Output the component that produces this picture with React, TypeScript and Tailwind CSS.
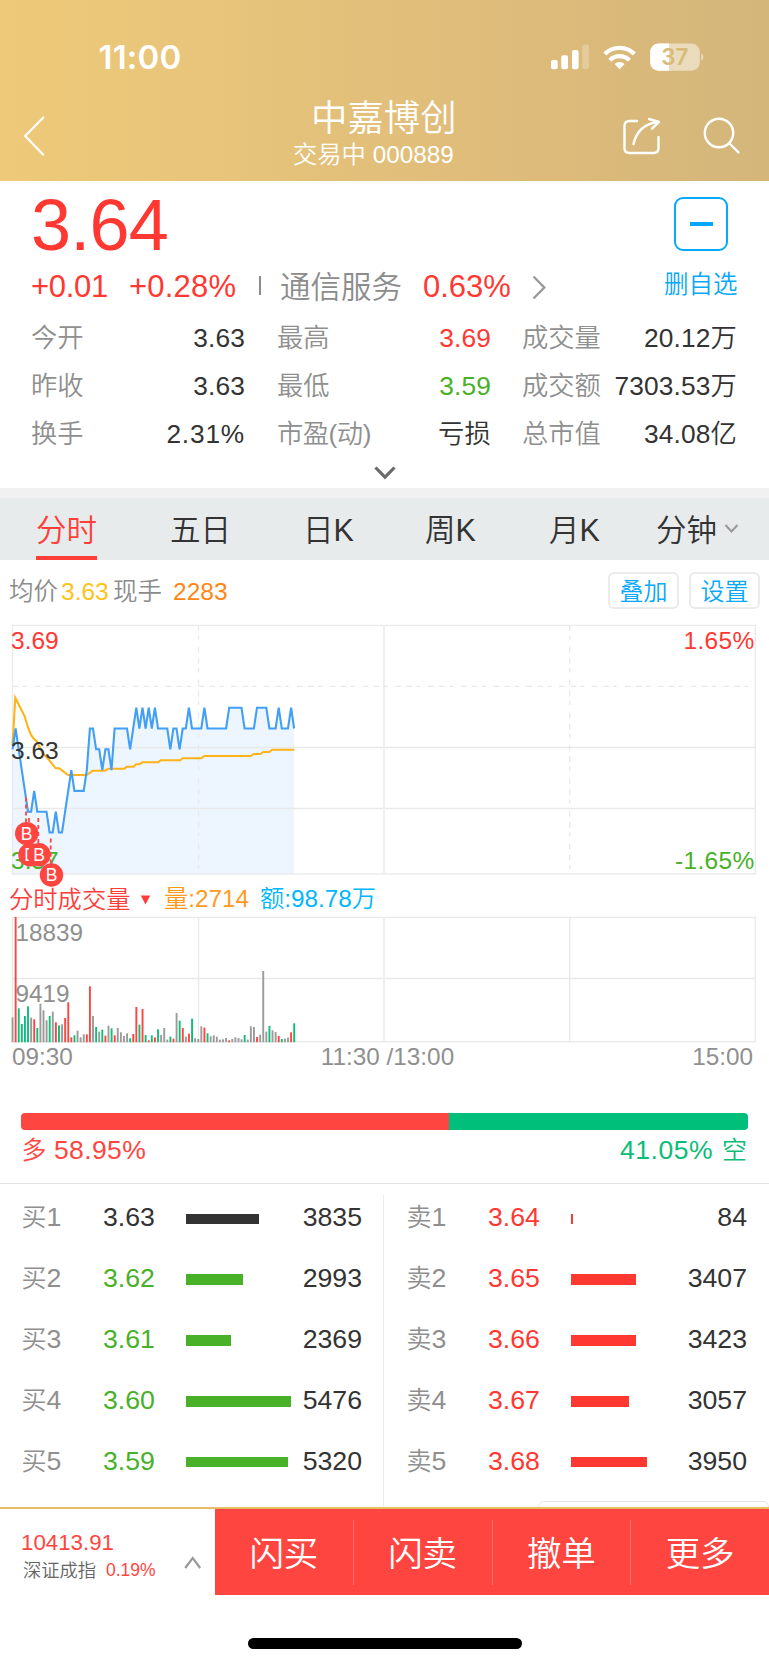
import React from "react";

const GRAY = "#8f8f8f";
const RED = "#ff3832";
const GREEN = "#48b128";

const LEFT = 12.5;
const RIGHT = 755.3;
const STEP = 3.095;

// Price level per minute, counted in ticks of 0.01 above 3.59
const ticks: number[] = [
  4, 5, 4, 3, 2, 1, 1, 2, 1, 1, 1, 1, 0, 0, 1, 0, 0, 1, 2, 3, 2, 2, 2, 2, 3, 5, 5, 4, 4, 3, 4, 4, 3, 5, 5, 5, 5, 5, 4, 5,
  6, 5, 6, 5, 6, 5, 6, 5, 5, 5, 5, 4, 5, 5, 4, 5, 5, 6, 5, 5, 5, 5, 6, 5, 5, 5, 5, 5, 5, 5, 6, 6, 6, 6, 6, 5, 5, 5, 5, 6,
  6, 6, 6, 5, 5, 5, 6, 5, 5, 5, 6, 5,
];

const pricePoints = ticks
  .map((t, i) => `${(LEFT + i * STEP).toFixed(1)},${(832.5 - t * 20.8 - 615).toFixed(1)}`)
  .join(" ");
const priceArea = `${LEFT},259 ${pricePoints} ${LEFT + 91 * STEP},259`;

const averagePoints =
  "12.5,130 15.3,82.7 24.7,101.3 27.7,111.7 31,120 34,124 37,126.3 40,133.3 43.3,138.7 49.3,145.3 55.7,153.3 59.3,153.3 68,160 86.7,160 92.7,155.7 105,155.7 108.3,153.7 124.3,153.7 127,151.7 133.7,151.7 136,149.3 139.3,149.3 142.3,147.3 158.3,147.3 160.7,145.3 180.3,145.3 182.7,143.3 201.3,143.3 204.3,141 250.7,141 253.7,139 260.3,139 263.3,137 269.3,137 272.3,134.7 294.3,134.7";

type Bar = [string, number];
// Colour key and height in thirds of a pixel
const bars: Bar[] = [
  ["n", 75], ["r", 376], ["g", 102], ["g", 55], ["g", 79], ["g", 108], ["n", 74], ["r", 69], ["g", 43], ["n", 116],
  ["n", 96], ["n", 66], ["g", 79], ["n", 92], ["r", 60], ["g", 51], ["n", 54], ["r", 73], ["r", 120], ["r", 15],
  ["g", 21], ["n", 35], ["n", 15], ["n", 24], ["r", 24], ["r", 168], ["n", 79], ["g", 46], ["n", 32], ["g", 38],
  ["r", 20], ["n", 50], ["g", 42], ["r", 21], ["n", 43], ["n", 30], ["n", 19], ["n", 27], ["g", 12], ["r", 25],
  ["r", 106], ["g", 53], ["r", 100], ["g", 22], ["r", 6], ["g", 21], ["r", 15], ["g", 39], ["n", 22], ["n", 43],
  ["n", 8], ["g", 17], ["r", 11], ["n", 88], ["g", 65], ["r", 43], ["n", 17], ["r", 26], ["g", 71], ["n", 12],
  ["n", 10], ["n", 48], ["r", 44], ["g", 27], ["n", 18], ["n", 21], ["n", 17], ["n", 8], ["n", 9], ["n", 13],
  ["r", 6], ["n", 10], ["n", 15], ["n", 13], ["n", 9], ["g", 22], ["n", 8], ["n", 48], ["n", 46], ["r", 16],
  ["n", 23], ["n", 214], ["n", 32], ["g", 49], ["n", 36], ["n", 31], ["r", 19], ["g", 10], ["n", 11], ["n", 14],
  ["r", 30], ["g", 57],
];
const barColor: Record<string, string> = { n: "#9b9b9b", r: "#ff4540", g: "#0dbf7b" };

function StatusBar() {
  return (
    <div className="flex h-[114px] items-end pl-[98.500px]">
      <div className="w-[452.500px] font-[Inter] text-[33px] leading-[40px] font-semibold text-white mb-[37px] tracking-[0.2px]">11:00</div>
      <svg className="mb-[37px]" width="160" height="40" viewBox="551 37 160 40">
        <g fill="#fff">
          <rect x="551" y="60" width="6.7" height="9.2" rx="2" />
          <rect x="561.3" y="55.3" width="6.7" height="13.9" rx="2" />
          <rect x="572" y="50" width="6.6" height="19.2" rx="2" />
          <rect x="582.3" y="44.6" width="6.7" height="24.6" rx="2" opacity=".25" />
          <path d="M619.6 69.2l-5-5.2a7.6 7.6 0 0 1 10 0z" />
        </g>
        <g fill="none" stroke="#fff" strokeWidth="4.2">
          <path d="M609.8 60.2a14 14 0 0 1 19.6 0" />
          <path d="M604.8 53.8a21.5 21.5 0 0 1 29.6 0" strokeWidth="4.4" />
        </g>
        <clipPath id="battery"><rect x="650.2" y="43.6" width="49.6" height="27.2" rx="8.5" /></clipPath>
        <g clipPath="url(#battery)">
          <rect x="650" y="43" width="50" height="29" fill="#fff" opacity=".5" />
          <rect x="650" y="43" width="19" height="29" fill="#fff" />
        </g>
        <path d="M701.3 53.5a4.6 4.6 0 0 1 0 7.6z" fill="#fff" opacity=".55" />
        <text x="674.8" y="65.2" fontSize="22.5" fontWeight="600" textAnchor="middle" fontFamily="Inter" fill="#d9bb79">37</text>
      </svg>
    </div>
  );
}

function Header() {
  return (
    <header className="h-[181px] bg-[linear-gradient(90deg,#eec979_0%,#e8c57a_25%,#e0bd7a_58%,#d4b67b_100%)]">
      <StatusBar />
      <div className="-mt-[21px] flex h-[80px] items-start text-white">
        <div className="w-[293px] pl-[22px] pt-[21px]">
          <svg width="25" height="44" viewBox="22 114 25 44" fill="none" stroke="#fff" strokeWidth="2.2" strokeLinecap="round">
            <path d="M43.3 117.5L25.2 136l18.1 18.7" />
          </svg>
        </div>
        <div className="w-[329px]">
          <div className="pl-[18px] pt-[2px] text-[36.400px] leading-[48px]">中嘉博创</div>
          <div className="-mt-[2px] text-[24.300px] leading-[28px] whitespace-pre">交易中 000889</div>
        </div>
        <svg className="mt-[21px]" width="120" height="44" viewBox="622 114 120 44" fill="none" stroke="#fff" strokeWidth="2.4" strokeLinecap="round" strokeLinejoin="round">
          <path d="M637 121h-7.500q-5 0-5 5v22q0 5 5 5h24q5 0 5-5v-11" />
          <path d="M633.5 144q4.500-19.500 24.500-22M649 119l10 2.800-7 6.800" />
          <circle cx="719" cy="133" r="14.200" />
          <path d="M729.500 143.500l9 8.800" />
        </svg>
      </div>
    </header>
  );
}

type Cell = [string, string, string];
const stats: Cell[][] = [
  [["今开", "3.63", "#333333"], ["最高", "3.69", RED], ["成交量", "20.12万", "#333333"]],
  [["昨收", "3.63", "#333333"], ["最低", "3.59", GREEN], ["成交额", "7303.53万", "#333333"]],
  [["换手", "2.31%", "#333333"], ["市盈(动)", "亏损", "#333333"], ["总市值", "34.08亿", "#333333"]],
];

function Quote() {
  return (
    <section className="h-[307px] pl-[31px]">
      <div className="flex h-[79px]">
        <div className="w-[643px] pt-[9px] text-[72px] leading-[70px] tracking-[-0.8px] text-[#ff3832]">3.64</div>
        <div className="mt-[16px] flex h-[54px] w-[54px] items-center justify-center rounded-[9px] border-2 border-[#08a8fb]">
          <div className="h-[4px] w-[23px] bg-[#00a6ff]" />
        </div>
      </div>
      <div className="flex h-[53px] items-center text-[31px] leading-[40px] text-[#ff3832]">
        <div className="w-[98px] tracking-[-0.3px]">+0.01</div>
        <div className="w-[130px] tracking-[0.2px]">+0.28%</div>
        <div className="h-[19px] w-[2px] -mt-[2px] bg-[#8c8c8c]" />
        <div className="w-[162px] pl-[19px] text-[30.5px] text-[#8c8c8c]">通信服务</div>
        <div className="w-[109px]">0.63%</div>
        <svg width="20" height="28" viewBox="0 0 20 28" fill="none" stroke="#999" strokeWidth="2.400">
          <path d="M1.500 3.500l10.800 11L1.500 25.500" />
        </svg>
        <div className="-mt-[4px] ml-[112px] text-[24.500px] text-[#08a8fb]">删自选</div>
      </div>
      <div className="pt-px">
        {stats.map((row, i) => (
          <div key={i} className="flex h-[48px] items-center text-[26.300px] leading-[40px]">
            {row.map(([label, value, color], j) => (
              <div key={j} className={["flex justify-between w-[214px]", "flex justify-between w-[214px] ml-[32px]", "flex justify-between w-[215px] ml-[31px]"][j]}>
                <span className={label.includes("(") ? "tracking-[-0.5px] text-[#8f8f8f]" : "text-[#8f8f8f]"}>{label}</span>
                <span className={value.endsWith("%") ? "tracking-[0.8px]" : "tracking-[0.15px]"} style={{ color }}>{value}</span>
              </div>
            ))}
          </div>
        ))}
      </div>
      <svg className="ml-[342px] mt-[6px]" width="24" height="18" viewBox="0 0 24 18" fill="none" stroke="#6b6b6b" strokeWidth="3.200">
        <path d="M2.500 3.500L12 13.200l9.500-9.700" />
      </svg>
    </section>
  );
}

function Tabs() {
  return (
    <nav className="flex h-[72px] border-t-[10px] border-[#f1f1f1] bg-[#e8ebec] pl-[36px] text-[30.500px] leading-[64px] text-[#333]">
      <div className="w-[134px]">
        <div className="h-[58px] w-[61px] text-[#ff3e38]">分时</div>
        <div className="h-[4px] w-[61px] bg-[#ff3e38]" />
      </div>
      <div className="w-[133px]">五日</div>
      <div className="w-[122px]">日K</div>
      <div className="w-[124px]">周K</div>
      <div className="w-[107px]">月K</div>
      <div className="w-[70px]">分钟</div>
      <svg className="mt-[25px] -ml-[2px]" width="16" height="12" viewBox="0 0 16 12" fill="none" stroke="#999" strokeWidth="2">
        <path d="M1.500 2l6 6.500 6-6.500" />
      </svg>
    </nav>
  );
}

function ChartInfo() {
  return (
    <div className="flex h-[55px] items-center pt-[8px] pl-[9px] text-[24.500px] leading-[36px]">
      <div className="w-[52px] text-[#8c8c8c]">均价</div>
      <div className="w-[52px] text-[#fdc31c]">3.63</div>
      <div className="w-[60px] text-[#8c8c8c]">现手</div>
      <div className="w-[435px] text-[#ff8514]">2283</div>
      <div className="-mt-[2px] h-[37px] w-[71px] rounded-[6px] border-2 border-[#ebebeb] text-center leading-[35px] text-[24px] text-[#08a8fb]">叠加</div>
      <div className="-mt-[2px] ml-[10px] h-[37px] w-[71px] rounded-[6px] border-2 border-[#ebebeb] text-center leading-[35px] text-[24px] text-[#08a8fb]">设置</div>
    </div>
  );
}

function Marker({ x, y, children }: { x: number; y: number; children: string }) {
  return (
    <g>
      <circle cx={x} cy={y} r="11.700" fill="#ff4540" />
      <text x={x} y={y + 6.400} fontSize="17.500" textAnchor="middle" fill="#fff">{children}</text>
    </g>
  );
}

function PriceChart() {
  return (
    <svg className="relative z-10 block overflow-visible" width="769" height="268" viewBox="0 0 769 268" fontSize="24.500">
      <polygon points={priceArea} fill="#edf5fe" />
      <g fill="none" stroke="#e9e9e9" strokeWidth="1.300">
        <rect x={LEFT} y="10.400" width={RIGHT - LEFT} height="248.600" />
        <path d="M12.500 132.500H755M12.500 193.500H755" />
        <path d="M384 10V259" strokeWidth="2" stroke="#efefef" />
        <path d="M12.500 71.400H755" strokeDasharray="6 4.400 4 7.400 6 5" />
        <path d="M198.500 10V259M569.700 10V259" strokeDasharray="6 4.400 4 7.400 6 5" />
      </g>
      <polyline points={averagePoints} fill="none" stroke="#ffb319" strokeWidth="2.100" />
      <polyline points={pricePoints} fill="none" stroke="#429ff5" strokeWidth="2.100" />
      <text x="11" y="34" fill={RED}>3.69</text>
      <text x="11" y="144" fill="#333">3.63</text>
      <text x="11" y="254" fill={GREEN}>3.57</text>
      <text x="754.500" y="34" textAnchor="end" fill={RED} letterSpacing=".3">1.65%</text>
      <text x="754.500" y="254" textAnchor="end" fill={GREEN} letterSpacing=".3">-1.65%</text>
      <path d="M26 182.500V207M29 203V230M38.300 203V230M50.700 223.500V250" stroke="#ff4540" strokeWidth="1.800" strokeDasharray="4 3" />
      <Marker x={26.700} y={218.600}>B</Marker>
      <Marker x={30} y={239.700}>B</Marker>
      <Marker x={39} y={239.700}>B</Marker>
      <Marker x={51.500} y={260}>B</Marker>
    </svg>
  );
}

function VolumeChart() {
  return (
    <>
      <div className="flex h-[32px] items-center pl-[9px] text-[24.300px] leading-[32px]">
        <div className="w-[131px] pt-px text-[#ff3e3a]">分时成交量</div>
        <svg className="w-[24px]" width="24" height="12" viewBox="0 0 24 12"><path d="M.8 2.500h9.400l-4.700 9z" fill="#ff3e3a" /></svg>
        <div className="w-[96px] text-[#ff9a1f]">量:2714</div>
        <div className="text-[#00b6ff]">额:98.78万</div>
      </div>
      <svg className="block" width="769" height="159" viewBox="0 915 769 159" fontSize="24.300" fill={GRAY}>
        <g fill="none" stroke="#e9e9e9" strokeWidth="1.300">
          <rect x={LEFT} y="917.400" width={RIGHT - LEFT} height="124.300" />
          <path d="M12.500 978.500H755M198.500 917V1042M569.700 917V1042" />
          <path d="M384 917V1042" strokeWidth="2" stroke="#efefef" />
        </g>
        <text x="15.500" y="940.700">18839</text>
        <text x="15.500" y="1002">9419</text>
        {bars.map(([c, h], i) => (
          <rect key={i} x={LEFT - 0.9 + i * STEP} y={1042.300 - h / 3} width="1.900" height={h / 3} fill={barColor[c]} />
        ))}
        <text x="12" y="1065">09:30</text>
        <text x="387.500" y="1065" textAnchor="middle">11:30 /13:00</text>
        <text x="753" y="1065" textAnchor="end">15:00</text>
      </svg>
    </>
  );
}

function Ratio() {
  return (
    <section className="h-[110px] border-b border-[#e0e0e0] pl-[20.500px] pr-[21.500px] pt-[39px]">
      <div className="flex h-[16.500px] overflow-hidden rounded-[4px]">
        <div className="w-[58.950%] bg-[#ff4540]" />
        <div className="flex-1 bg-[#00bf7b]" />
      </div>
      <div className="flex justify-between pt-[3px] pl-px text-[26.500px] leading-[34px]">
        <div className="tracking-[0.4px] text-[#ff4540]"><span className="mr-[7px] text-[25px]">多</span>58.95%</div>
        <div className="tracking-[0.5px] text-[#0bbd76]">41.05%<span className="ml-[9px] text-[25px]">空</span></div>
      </div>
    </section>
  );
}

type Order = [string, string, number, string];
const bids: Order[] = [
  ["买1", "3.63", 3835, "#333333"],
  ["买2", "3.62", 2993, GREEN],
  ["买3", "3.61", 2369, GREEN],
  ["买4", "3.60", 5476, GREEN],
  ["买5", "3.59", 5320, GREEN],
];
const asks: Order[] = [
  ["卖1", "3.64", 84, RED],
  ["卖2", "3.65", 3407, RED],
  ["卖3", "3.66", 3423, RED],
  ["卖4", "3.67", 3057, RED],
  ["卖5", "3.68", 3950, RED],
];

function OrderRow({ order: [label, price, volume, color] }: { order: Order }) {
  return (
    <div className="flex h-[60.800px] items-center text-[26.700px] leading-[40px]">
      <div className="w-[81.500px] text-[#8f8f8f]"><span className="text-[25px]">{label[0]}</span>{label[1]}</div>
      <div className="w-[82.500px]" style={{ color }}>{price}</div>
      <div className="mt-[3px] h-[10.700px] w-[105px]">
        <div className="h-full" style={{ width: Math.max(2, volume * 0.01925), background: color }} />
      </div>
      <div className="w-[71.500px] text-right text-[#333]">{volume}</div>
    </div>
  );
}

function OrderBook() {
  return (
    <section className="relative flex h-[323px] overflow-hidden pl-[21.500px]">
      <div className="w-[361.500px] pt-[3px]">{bids.map((o) => <OrderRow key={o[0]} order={o} />)}</div>
      <div className="mt-[11px] w-px bg-[#ebebeb]" />
      <div className="pl-[22.500px] pt-[3px]">{asks.map((o) => <OrderRow key={o[0]} order={o} />)}</div>
      <div className="absolute right-0 bottom-[-9px] h-[15px] w-[231px] rounded-[6px] border-[1.500px] border-[#e6e6e6] bg-white" />
    </section>
  );
}

function BottomBar() {
  return (
    <footer className="flex h-[88px] border-t-[2px] border-[#e8bd68]">
      <div className="flex w-[215px] pl-[21px]">
        <div className="w-[163px] pt-[21px]">
          <div className="text-[22.300px] leading-[26px] text-[#ff4540]">10413.91</div>
          <div className="flex items-center pt-[2px] leading-[26px]">
            <span className="ml-[2px] w-[83px] text-[18.300px] text-[#666]">深证成指</span>
            <span className="-mt-[3px] text-[17.500px] text-[#ff4540]">0.19%</span>
          </div>
        </div>
        <svg className="mt-[46px]" width="18" height="16" viewBox="0 0 18 16" fill="none" stroke="#999" strokeWidth="2.200">
          <path d="M1.200 13L8.700 3l7.500 10" />
        </svg>
      </div>
      <div className="flex flex-1 items-center bg-[#ff4540] text-[34.500px] leading-[50px] text-white">
        {["闪买", "闪卖", "撤单", "更多"].map((t, i) => (
          <React.Fragment key={t}>
            {i > 0 && <div className="h-[65px] w-px bg-[#ff726e]" />}
            <div className="flex-1 pt-[3px] text-center">{t}</div>
          </React.Fragment>
        ))}
      </div>
    </footer>
  );
}

export default function App() {
  return (
    <div className="h-[1665px] w-[769px] overflow-hidden bg-white font-['Liberation_Sans','Noto_Sans_CJK_SC',sans-serif] font-[350] whitespace-nowrap">
      <Header />
      <Quote />
      <Tabs />
      <ChartInfo />
      <PriceChart />
      <VolumeChart />
      <Ratio />
      <OrderBook />
      <BottomBar />
      <div className="mx-auto mt-[43px] h-[11px] w-[274px] rounded-full bg-black" />
    </div>
  );
}
